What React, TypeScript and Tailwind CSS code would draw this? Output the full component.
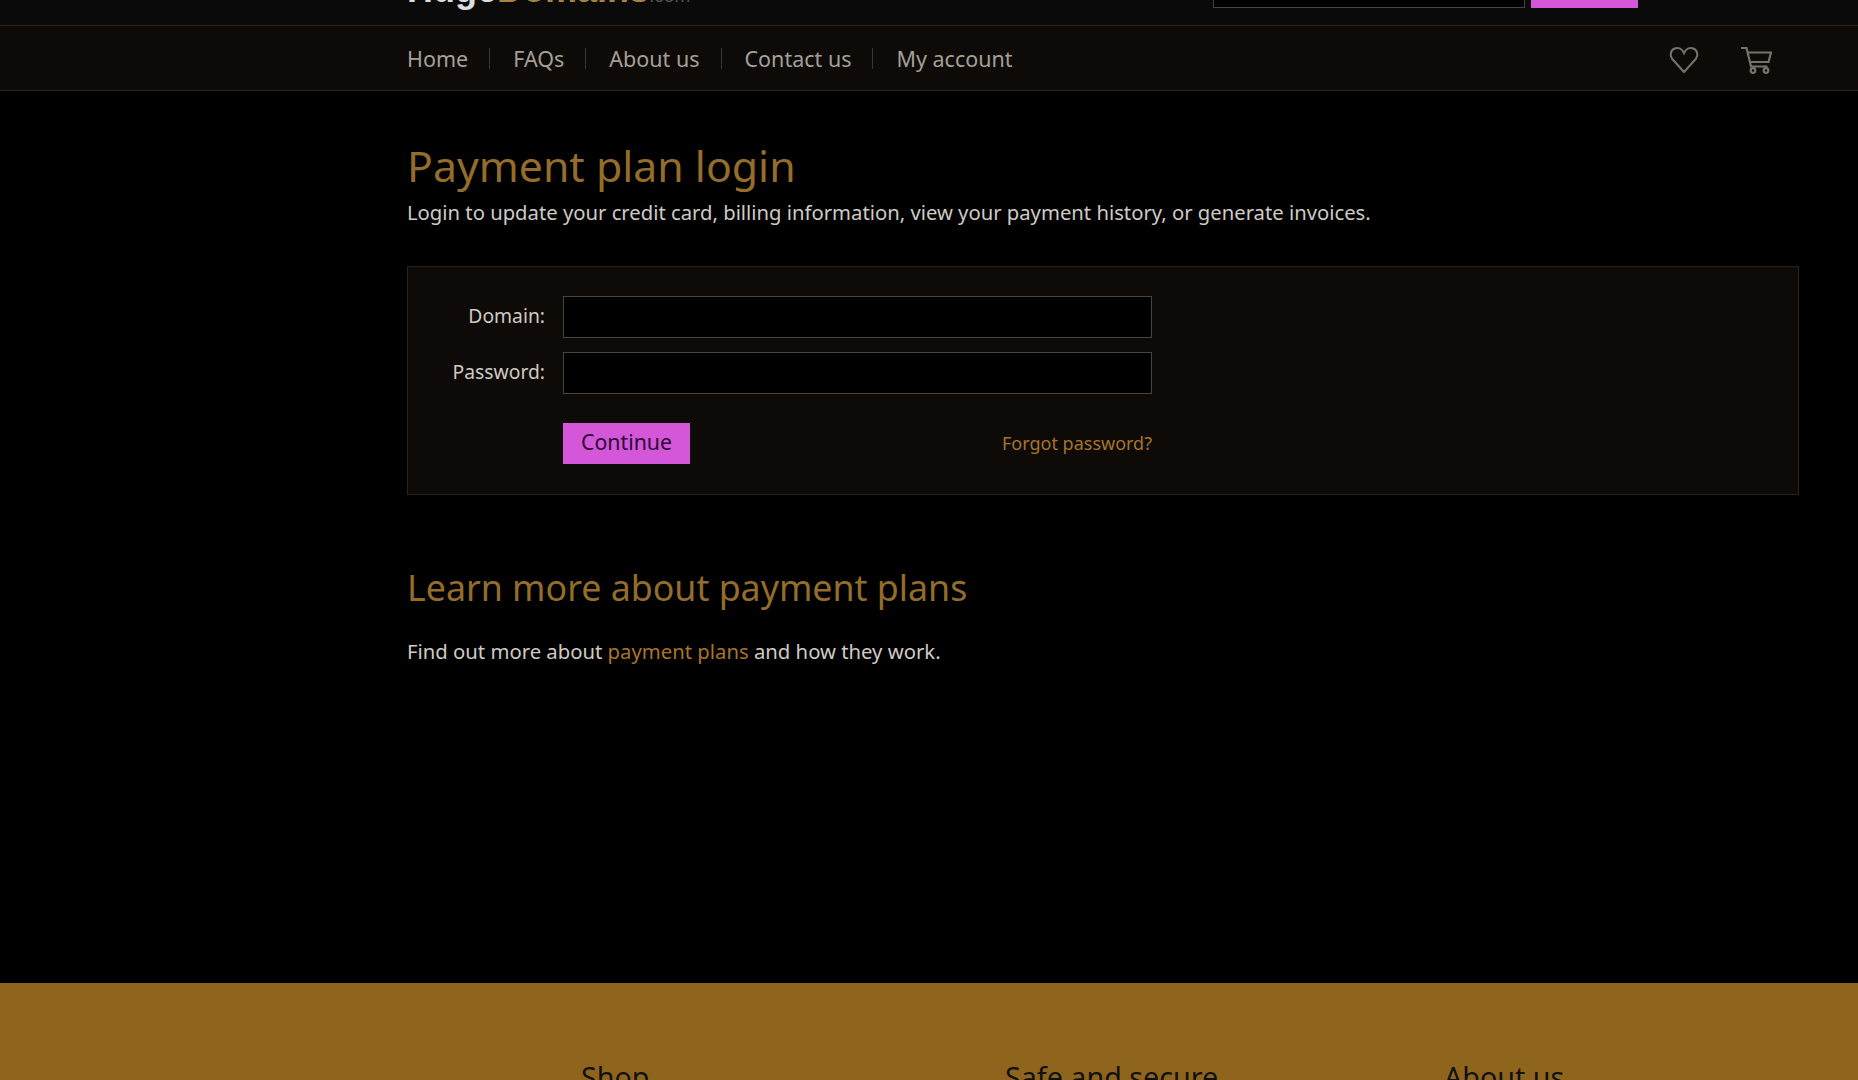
export default function App() {
  const nav = ["Home", "FAQs", "About us", "Contact us", "My account"];
  return (
    <div className="h-[1080px] overflow-hidden bg-black text-[#cfcbc4] font-['Noto_Sans','Open_Sans',sans-serif] flex flex-col">
      <div className="h-[25px] shrink-0 bg-[#0a0a0a] overflow-hidden relative">
        <div className="absolute left-[407px] bottom-[17px] leading-none whitespace-nowrap font-['Liberation_Sans',sans-serif] font-bold text-[36px]">
          <span className="text-[#dcdcdc]">Huge</span>
          <span className="text-[#a98342]">Domains</span>
          <span className="text-[#55504a] font-normal text-[19px]">.com</span>
        </div>
        <div className="absolute left-[1213px] bottom-[17px] w-[312px] h-[20px] bg-black border border-[#444]" />
        <div className="absolute left-[1531px] bottom-[17px] w-[107px] h-[20px] bg-[#d557d9]" />
      </div>
      <div className="h-[66px] shrink-0 bg-[#0d0a07] border-y border-[#262626] flex items-center pl-[407px] pr-[86px]">
        <nav className="flex items-center flex-1 text-[21.5px] text-[#a4a098]">
          {nav.map((n, i) => (
            <span key={n} className={i === 0 ? "pr-[21px] leading-[21px]" : i === nav.length - 1 ? "pl-[23px] leading-[21px] border-l border-[#3a362f]" : "pl-[23px] pr-[21px] leading-[21px] border-l border-[#3a362f]"}>{n}</span>
          ))}
        </nav>
        <svg width="30" height="28" viewBox="0 0 32 28" preserveAspectRatio="none" fill="none" stroke="#77736b" strokeWidth="2.200" className="mr-[41px] mt-[4px]">
          <path d="M16 26 L3.5 13 C0.5 9.5 1.5 4 6 2.5 C10 1.2 14 3 16 7 C18 3 22 1.2 26 2.5 C30.500 4 31.500 9.500 28.500 13 Z" />
        </svg>
        <svg width="32" height="28" viewBox="0 0 32 28" fill="none" stroke="#77736b" strokeWidth="2.200" className="mt-[4px]">
          <path d="M1 2 H6.500 L11 20.500 H27.500" />
          <path d="M8 6.500 H31 L28.500 16 H10" />
          <circle cx="13" cy="24.500" r="2.300" />
          <circle cx="26" cy="24.500" r="2.300" />
        </svg>
      </div>
      <main className="flex-1 pl-[407px] pr-[59px] pt-[50px]">
        <h1 className="text-[42.8px] leading-[50px] text-[#946d2a]">Payment plan login</h1>
        <p className="text-[20.25px] leading-[28px] mt-[7px]">Login to update your credit card, billing information, view your payment history, or generate invoices.</p>
        <div className="mt-[40px] h-[229px] bg-[#0d0a07] border border-[#262420] pt-[29px]">
          <div className="flex items-center h-[42px]">
            <label className="w-[137px] text-right text-[19.3px] pb-[1px]">Domain:</label>
            <div className="ml-[18px] w-[589px] h-[42px] bg-black border border-[#444]" />
          </div>
          <div className="flex items-center h-[42px] mt-[14px]">
            <label className="w-[137px] text-right text-[19.3px] pb-[1px]">Password:</label>
            <div className="ml-[18px] w-[589px] h-[42px] bg-black border border-[#444]" />
          </div>
          <div className="flex items-center justify-between ml-[155px] w-[589px] mt-[29px]">
            <button className="w-[127px] h-[41px] bg-[#d557d9] text-[#2a0a33] text-[21.3px] pb-[3px]">Continue</button>
            <a className="text-[18px] text-[#a8742a]">Forgot password?</a>
          </div>
        </div>
        <h2 className="mt-[68px] text-[35.75px] leading-[48px] text-[#946d2a]">Learn more about payment plans</h2>
        <p className="mt-[26px] text-[20.3px] leading-[28px]">Find out more about <a className="text-[#a8742a]">payment plans</a> and how they work.</p>
      </main>
      <footer className="h-[97px] shrink-0 bg-[#8f651e] text-[#111] text-[28.7px] leading-[36px] overflow-hidden relative">
        <span className="absolute left-[581px] top-[76px]">Shop</span>
        <span className="absolute left-[1005px] top-[76px]">Safe and secure</span>
        <span className="absolute left-[1444px] top-[76px]">About us</span>
      </footer>
    </div>
  );
}
